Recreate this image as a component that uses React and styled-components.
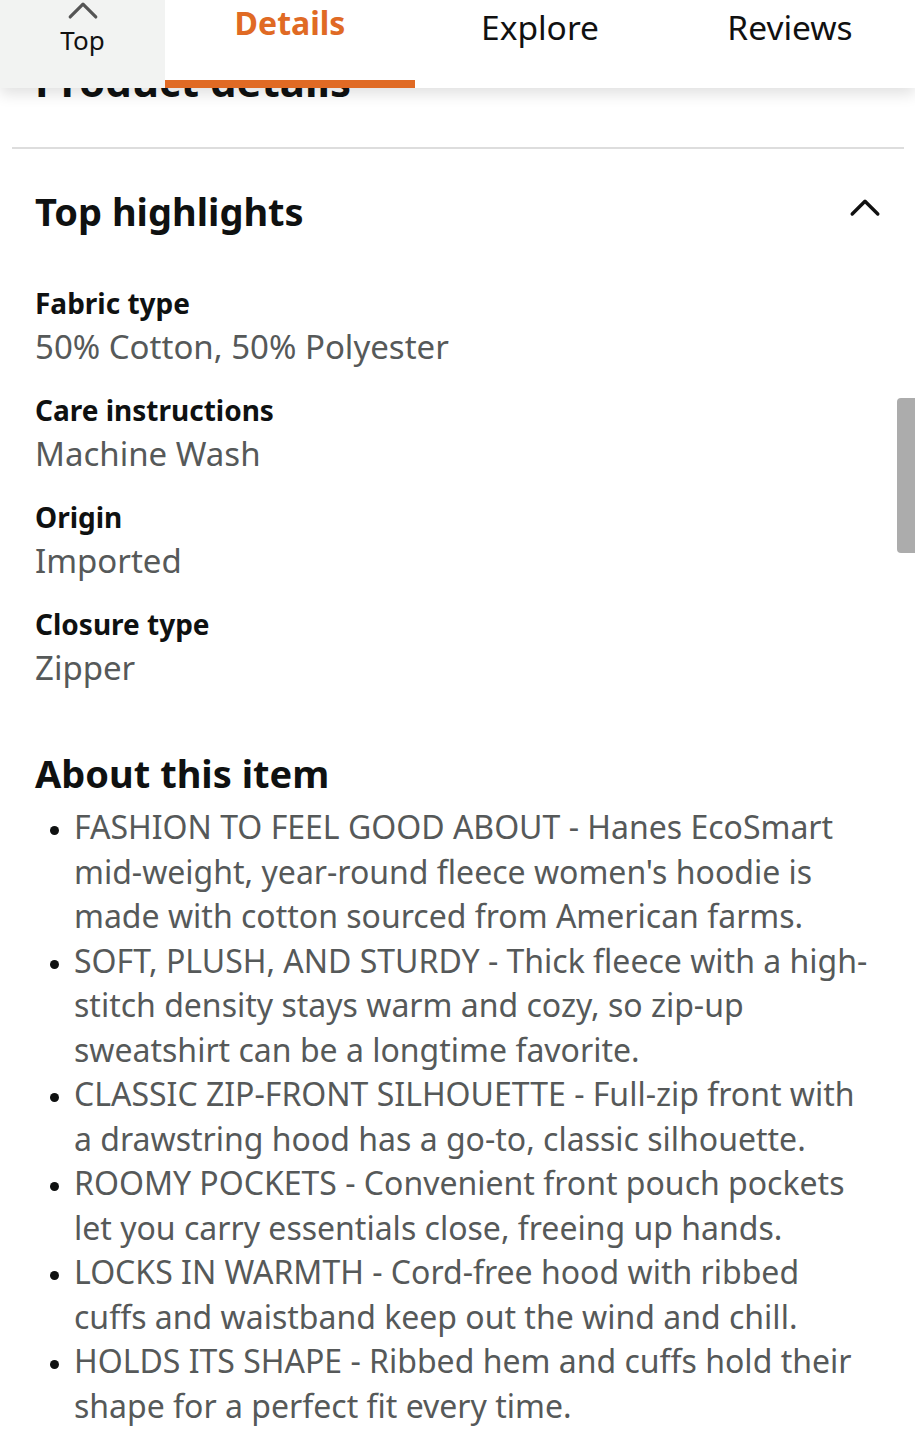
import React from "react";
import styled, { createGlobalStyle } from "styled-components";

const GlobalStyle = createGlobalStyle`
  html, body {
    margin: 0;
    padding: 0;
    background: #ffffff;
    font-family: "Noto Sans", "Open Sans", sans-serif;
    color: #0f1111;
  }
  * { box-sizing: border-box; }
`;

const highlights = [
  { label: "Fabric type", value: "50% Cotton, 50% Polyester" },
  { label: "Care instructions", value: "Machine Wash" },
  { label: "Origin", value: "Imported" },
  { label: "Closure type", value: "Zipper" },
];

const bullets = [
  "FASHION TO FEEL GOOD ABOUT - Hanes EcoSmart mid-weight, year-round fleece women's hoodie is made with cotton sourced from American farms.",
  "SOFT, PLUSH, AND STURDY - Thick fleece with a high-stitch density stays warm and cozy, so zip-up sweatshirt can be a longtime favorite.",
  "CLASSIC ZIP-FRONT SILHOUETTE - Full-zip front with a drawstring hood has a go-to, classic silhouette.",
  "ROOMY POCKETS - Convenient front pouch pockets let you carry essentials close, freeing up hands.",
  "LOCKS IN WARMTH - Cord-free hood with ribbed cuffs and waistband keep out the wind and chill.",
  "HOLDS ITS SHAPE - Ribbed hem and cuffs hold their shape for a perfect fit every time.",
];

const ChevronUp = ({ size = 28, color = "#111", stroke = 3 }) => (
  <svg width={size} height={size * 0.6} viewBox="0 0 30 18" fill="none">
    <path d="M3 15 L15 3 L27 15" stroke={color} strokeWidth={stroke} strokeLinecap="round" strokeLinejoin="round" />
  </svg>
);

const App = () => {
  return (
    <Page>
      <GlobalStyle />
      <TabBar>
        <TopTab>
          <ChevronUp size={32} color="#555" stroke={3} />
          <TopLabel>Top</TopLabel>
        </TopTab>
        <Tab active>Details</Tab>
        <Tab>Explore</Tab>
        <Tab>Reviews</Tab>
      </TabBar>

      <Content>
        <SectionTitle>Product details</SectionTitle>
        <Divider />
        <HighlightsHeader>
          <HighlightsTitle>Top highlights</HighlightsTitle>
          <CollapseIcon>
            <ChevronUp size={32} color="#111" stroke={3.2} />
          </CollapseIcon>
        </HighlightsHeader>
        <AttrList>
          {highlights.map((h) => (
            <Attr key={h.label}>
              <AttrLabel>{h.label}</AttrLabel>
              <AttrValue>{h.value}</AttrValue>
            </Attr>
          ))}
        </AttrList>
        <AboutTitle>About this item</AboutTitle>
        <BulletList>
          {bullets.map((b) => (
            <Bullet key={b}>{b}</Bullet>
          ))}
        </BulletList>
      </Content>
      <ScrollThumb />
    </Page>
  );
};

const Page = styled.div`
  position: relative;
  width: 915px;
  height: 1440px;
  overflow: hidden;
  background: #fff;
`;

const TabBar = styled.nav`
  position: absolute;
  top: 0;
  left: 0;
  right: 0;
  height: 88px;
  display: grid;
  grid-template-columns: 165px 250px 250px 250px;
  background: #fff;
  box-shadow: 0 6px 14px rgba(0, 0, 0, 0.12);
  z-index: 2;
`;

const TopTab = styled.div`
  background: #f2f3f2;
  display: flex;
  flex-direction: column;
  align-items: center;
  padding-top: 1px;
  gap: 7px;
`;

const TopLabel = styled.span`
  font-size: 26px;
  line-height: 26px;
  color: #111;
`;

const Tab = styled.div`
  display: flex;
  justify-content: center;
  padding-top: ${(p) => (p.active ? "3px" : "7px")};
  font-size: ${(p) => (p.active ? "32px" : "33.5px")};
  line-height: 40px;
  font-weight: ${(p) => (p.active ? 700 : 400)};
  color: ${(p) => (p.active ? "#e06a24" : "#111")};
  border-bottom: 8px solid ${(p) => (p.active ? "#e06a24" : "transparent")};
`;

const Content = styled.main`
  padding: 71px 12px 0 12px;
`;

const SectionTitle = styled.h2`
  margin: 0 0 0 23px;
  font-size: 42px;
  line-height: 20px;
  font-weight: 700;
`;

const Divider = styled.hr`
  margin: 56px 0 0 0;
  border: none;
  border-top: 2px solid #dddddd;
  width: 892px;
`;

const HighlightsHeader = styled.div`
  display: flex;
  justify-content: space-between;
  align-items: center;
  padding: 38px 22px 0 23px;
`;

const HighlightsTitle = styled.h3`
  margin: 0;
  font-size: 38px;
  line-height: 48px;
  font-weight: 700;
`;

const CollapseIcon = styled.span`
  display: flex;
  margin-bottom: 6px;
`;

const AttrList = styled.dl`
  margin: 47px 0 0 23px;
  display: flex;
  flex-direction: column;
  gap: 19px;
`;

const Attr = styled.div`
  display: flex;
  flex-direction: column;
`;

const AttrLabel = styled.dt`
  font-size: 28px;
  line-height: 42px;
  font-weight: 700;
  color: #0f1111;
`;

const AttrValue = styled.dd`
  margin: 0;
  font-size: 33px;
  line-height: 46px;
  color: #565959;
`;

const AboutTitle = styled.h3`
  margin: 58px 0 0 23px;
  font-size: 38px;
  line-height: 48px;
  font-weight: 700;
`;

const BulletList = styled.ul`
  margin: 8px 0 0 0;
  padding: 0 0 0 62px;
  width: 866px;
`;

const Bullet = styled.li`
  font-size: 32px;
  line-height: 44.5px;
  color: #565959;
  &::marker {
    color: #0f1111;
    font-size: 24px;
  }
`;

const ScrollThumb = styled.div`
  position: absolute;
  right: 0;
  top: 398px;
  width: 18px;
  height: 155px;
  background: #acacac;
  border-radius: 4px 0 0 4px;
`;

export default App;
